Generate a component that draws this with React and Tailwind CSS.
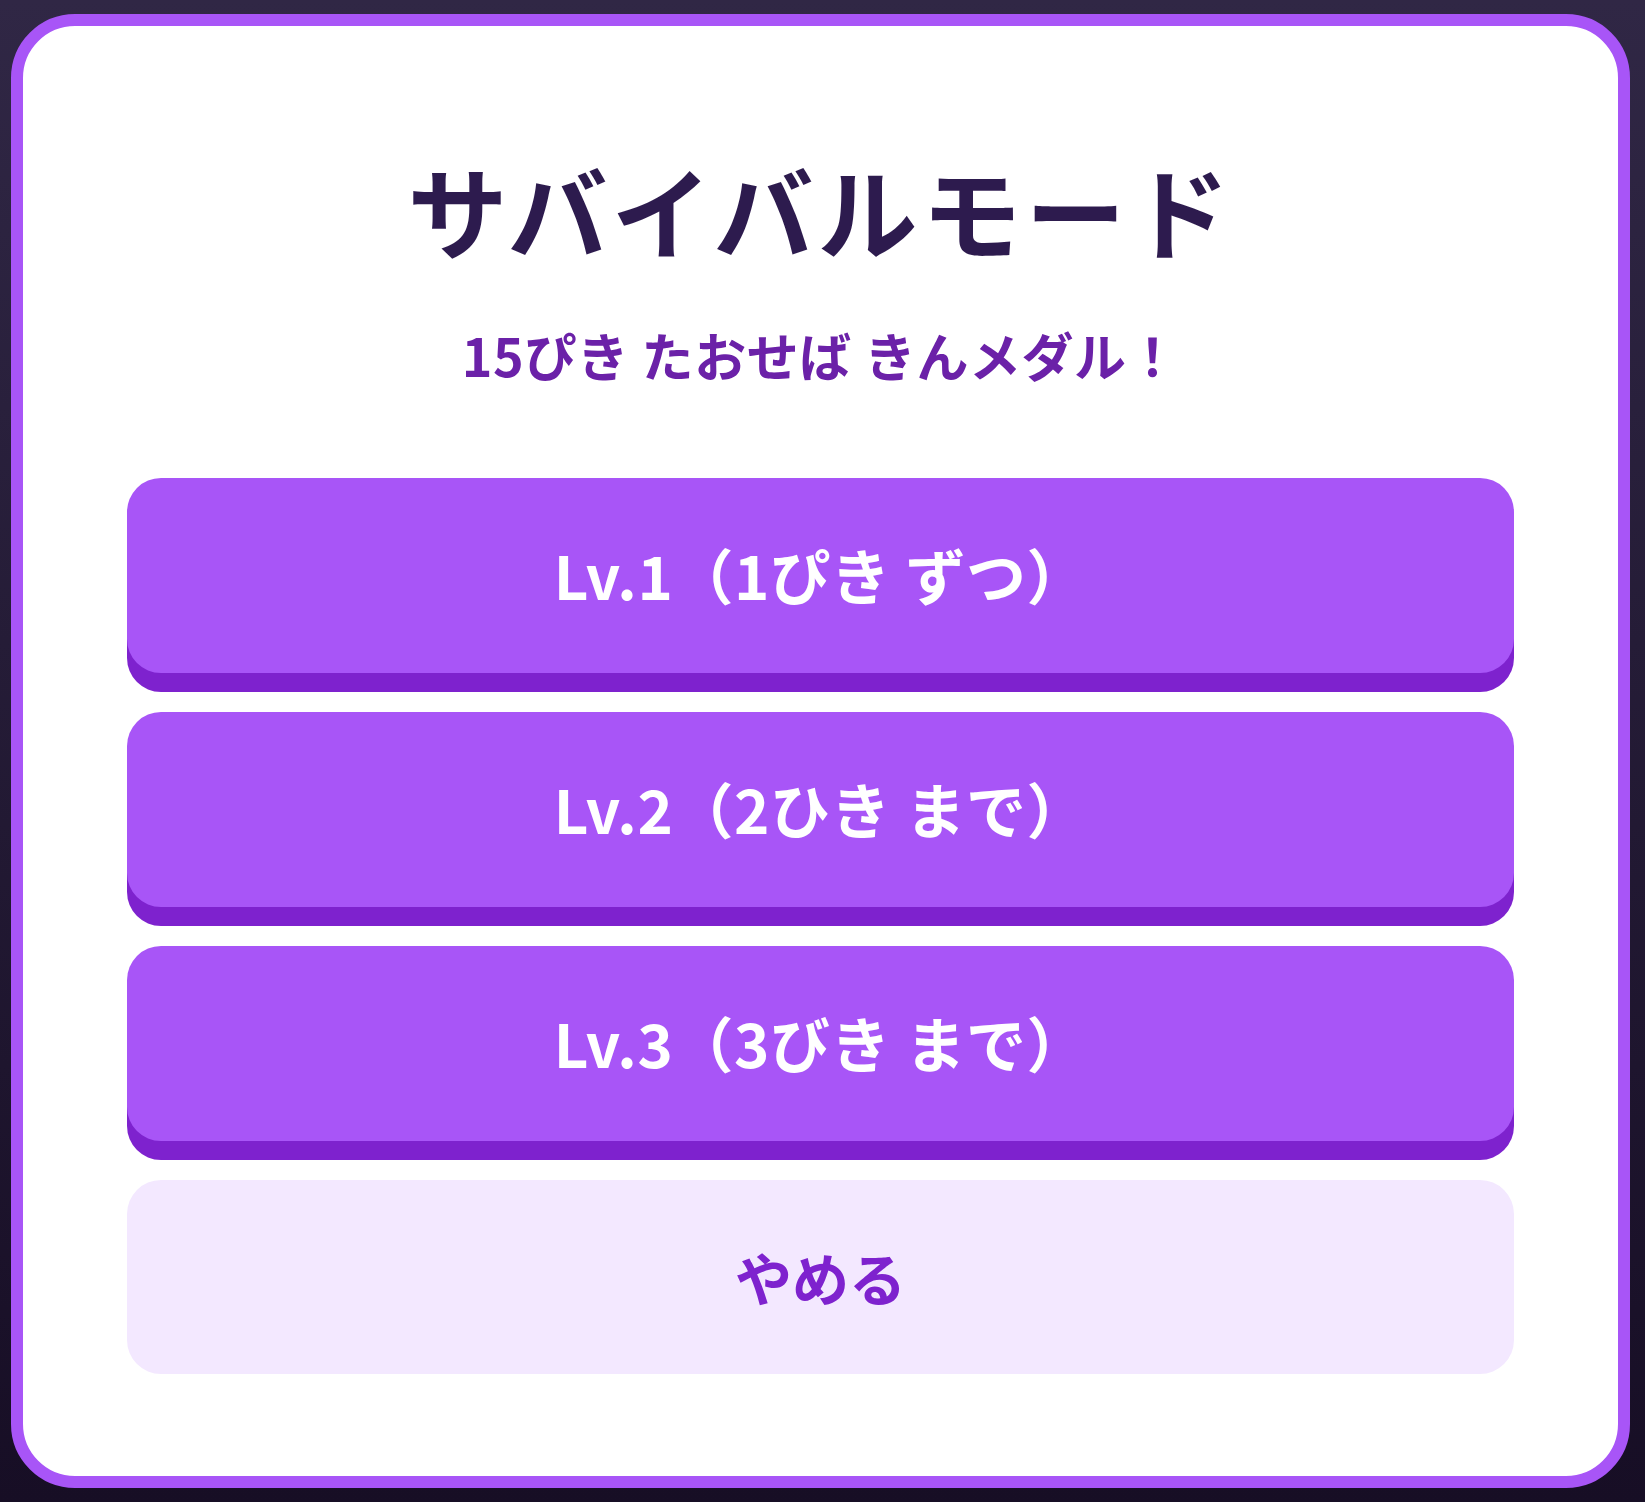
export default function App() {
  const levels = [
    "Lv.1（1ぴき ずつ）",
    "Lv.2（2ひき まで）",
    "Lv.3（3びき まで）",
  ];
  return (
    <div
      className="w-full h-[1502px] bg-gradient-to-b from-[#302745] to-[#170e25] pt-[14px] pb-[14px] pl-[11px] pr-[15px]"
      style={{ fontFamily: '"Noto Sans CJK JP", "Noto Sans", sans-serif' }}
    >
      <div className="h-full w-full rounded-[64px] border-[12px] border-[#a855f7] bg-white px-[104px] flex flex-col">
        <h1 className="mt-[123px] text-center text-[100px] leading-[120px] tracking-[0.04em] font-bold text-[#2d1b4e]">
          サバイバルモード
        </h1>
        <p className="mt-[56px] text-center text-[52px] leading-[60px] tracking-[0.01em] font-bold text-[#6b21a8]">
          15ぴき たおせば きんメダル！
        </p>
        <div className="mt-[93px] flex flex-col gap-[20px]">
          {levels.map((t) => (
            <button
              key={t}
              className="h-[195px] mb-[19px] w-full rounded-[34px] bg-[#a855f7] shadow-[0_19px_0_#7e22ce] text-white text-[60px] leading-[70px] pb-[4px] tracking-[0.01em] font-bold"
            >
              {t}
            </button>
          ))}
          <button className="h-[194px] w-full rounded-[34px] bg-[#f3e8ff] text-[#7e22ce] text-[57px] font-bold">
            やめる
          </button>
        </div>
      </div>
    </div>
  );
}
